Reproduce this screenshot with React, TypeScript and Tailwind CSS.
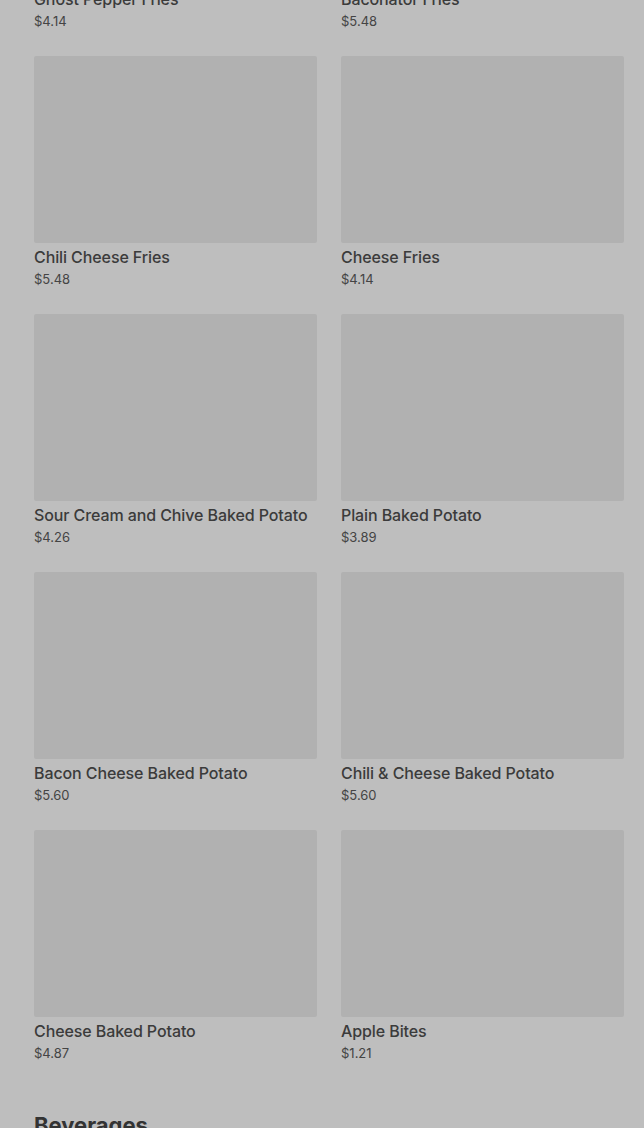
const items = [
  { name: "Ghost Pepper Fries", price: "$4.14" },
  { name: "Baconator Fries", price: "$5.48" },
  { name: "Chili Cheese Fries", price: "$5.48" },
  { name: "Cheese Fries", price: "$4.14" },
  { name: "Sour Cream and Chive Baked Potato", price: "$4.26" },
  { name: "Plain Baked Potato", price: "$3.89" },
  { name: "Bacon Cheese Baked Potato", price: "$5.60" },
  { name: "Chili & Cheese Baked Potato", price: "$5.60" },
  { name: "Cheese Baked Potato", price: "$4.87" },
  { name: "Apple Bites", price: "$1.21" },
];

function MenuItem({ name, price }: { name: string; price: string }) {
  return (
    <div className="flex flex-col">
      <div className="h-[187px] w-full rounded-[2px] bg-[#b1b1b1]" />
      <p className="mt-[3px] text-[16px] font-medium leading-[22px] tracking-[-0.1px] text-[#3b3b3b]">{name}</p>
      <p className="mt-[2px] text-[13px] leading-[18px] text-[#444444]">{price}</p>
    </div>
  );
}

export default function App() {
  return (
    <div className="h-[1128px] w-[644px] overflow-hidden bg-[#bebebe] font-['Inter',sans-serif]">
      <div className="-mt-[202px] pl-[34px] pr-[20px]">
        <div className="grid grid-cols-2 gap-x-[24px] gap-y-[26px]">
          {items.map((item) => (
            <MenuItem key={item.name} name={item.name} price={item.price} />
          ))}
        </div>
        <h2 className="mt-[48px] text-[22px] font-bold leading-[30px] text-[#333333]">Beverages</h2>
      </div>
    </div>
  );
}
